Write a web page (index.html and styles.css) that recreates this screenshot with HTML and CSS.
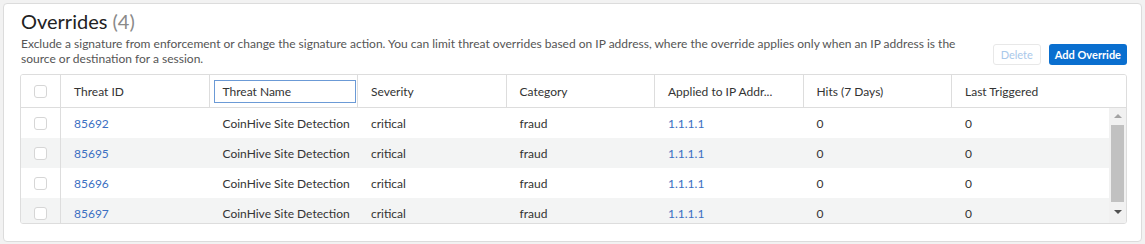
FILE: index.html
```html
<!DOCTYPE html>
<html lang="en">
<head>
    <meta charset="UTF-8">
    <title>Overrides</title>
    <link rel="stylesheet" href="styles.css">
</head>
<body>
    <section class="card">
        <div class="card-head">
            <div class="intro">
                <h2 class="title">Overrides <span class="count">(4)</span></h2>
                <p class="desc">Exclude a signature from enforcement or change the signature action. You can limit threat overrides based on IP address, where the override applies only when an IP address is the source or destination for a session.</p>
            </div>
            <div class="actions">
                <button class="btn btn-disabled">Delete</button>
                <button class="btn btn-primary">Add Override</button>
            </div>
        </div>

        <div class="grid">
            <div class="row row-head">
                <div class="cell cell-check"><span class="check"></span></div>
                <div class="cell">Threat ID</div>
                <div class="cell"><span class="focus-box">Threat Name</span></div>
                <div class="cell">Severity</div>
                <div class="cell">Category</div>
                <div class="cell">Applied to IP Addr...</div>
                <div class="cell">Hits (7 Days)</div>
                <div class="cell">Last Triggered</div>
            </div>
            <div class="grid-body">
                <div class="rows">
                    <div class="row">
                        <div class="cell cell-check"><span class="check"></span></div>
                        <div class="cell link">85692</div>
                        <div class="cell">CoinHive Site Detection</div>
                        <div class="cell">critical</div>
                        <div class="cell">fraud</div>
                        <div class="cell link">1.1.1.1</div>
                        <div class="cell">0</div>
                        <div class="cell">0</div>
                    </div>
                    <div class="row">
                        <div class="cell cell-check"><span class="check"></span></div>
                        <div class="cell link">85695</div>
                        <div class="cell">CoinHive Site Detection</div>
                        <div class="cell">critical</div>
                        <div class="cell">fraud</div>
                        <div class="cell link">1.1.1.1</div>
                        <div class="cell">0</div>
                        <div class="cell">0</div>
                    </div>
                    <div class="row">
                        <div class="cell cell-check"><span class="check"></span></div>
                        <div class="cell link">85696</div>
                        <div class="cell">CoinHive Site Detection</div>
                        <div class="cell">critical</div>
                        <div class="cell">fraud</div>
                        <div class="cell link">1.1.1.1</div>
                        <div class="cell">0</div>
                        <div class="cell">0</div>
                    </div>
                    <div class="row">
                        <div class="cell cell-check"><span class="check"></span></div>
                        <div class="cell link">85697</div>
                        <div class="cell">CoinHive Site Detection</div>
                        <div class="cell">critical</div>
                        <div class="cell">fraud</div>
                        <div class="cell link">1.1.1.1</div>
                        <div class="cell">0</div>
                        <div class="cell">0</div>
                    </div>
                </div>
                <div class="scrollbar">
                    <span class="arrow arrow-up"></span>
                    <span class="thumb"></span>
                    <span class="arrow arrow-down"></span>
                </div>
            </div>
        </div>
    </section>
</body>
</html>
```

FILE: styles.css
```css
:root {
    --page-bg: #f2f2f2;
    --card-border: #dcdcdc;
    --line-color: #dddddd;
    --text-color: #333333;
    --desc-color: #555555;
    --muted-color: #8a8a8a;
    --link-color: #3b6fc2;
    --primary-color: #0a6fcf;
    --stripe-color: #f3f4f4;
    --track-color: #f1f1f1;
}

* {
    margin: 0;
    padding: 0;
    box-sizing: border-box;
}

body {
    font-family: Lato, "Liberation Sans", Arial, sans-serif;
    background-color: var(--page-bg);
    color: var(--text-color);
    padding: 3px 3px 2px 3px;
    font-size: 12px;
}

/* --- card --- */
.card {
    background-color: #ffffff;
    border: 1px solid var(--card-border);
    border-radius: 4px;
    padding: 3px 14px 16px 16px;
    height: 239px;
}

.card-head {
    display: flex;
    align-items: flex-end;
    gap: 34px;
    margin-bottom: 8px;
}

.intro {
    flex: 1;
}

.title {
    font-size: 20px;
    font-weight: 400;
    line-height: 29px;
    color: #222222;
    padding-left: 1px;
}

.count {
    color: var(--muted-color);
}

.desc {
    color: var(--desc-color);
    line-height: 15px;
    padding-left: 1px;
}

.actions {
    display: flex;
    gap: 8px;
    padding-bottom: 1px;
}

/* --- buttons --- */
.btn {
    font-family: inherit;
    font-size: 11px;
    height: 21px;
    padding: 0 5px;
    border-radius: 3px;
    border: 1px solid transparent;
    cursor: pointer;
}

.btn-disabled {
    background-color: #ffffff;
    border-color: #e8e8e8;
    color: #a9c8ea;
    padding: 0 7px;
}

.btn-primary {
    background-color: var(--primary-color);
    color: #ffffff;
    font-weight: 700;
}

/* --- grid --- */
.grid {
    border: 1px solid var(--line-color);
    border-radius: 3px;
    overflow: hidden;
}

.row {
    display: grid;
    grid-template-columns: 40px repeat(6, 148.5px) 1fr;
    height: 30px;
    align-items: center;
}

.row:nth-child(even) {
    background-color: var(--stripe-color);
}

.row-head {
    height: 33px;
    border-bottom: 1px solid var(--line-color);
    background-color: #ffffff;
}

.cell {
    padding-left: 13px;
    height: 100%;
    display: flex;
    align-items: center;
    white-space: nowrap;
    overflow: hidden;
}

.row-head .cell {
    border-right: 1px solid var(--line-color);
    padding-top: 1px;
}

.row-head .cell:last-child {
    border-right: none;
}

.cell-check {
    justify-content: center;
    padding-left: 0;
    border-right: 1px solid var(--line-color);
}

.check {
    width: 13px;
    height: 13px;
    border: 1px solid #d6d6d6;
    border-radius: 3px;
    background-color: #ffffff;
}

.focus-box {
    border: 1px solid #6b9ad6;
    width: 142px;
    height: 23px;
    margin-left: -9px;
    padding-left: 8px;
    display: flex;
    align-items: center;
}

.link {
    color: var(--link-color);
}

/* --- scroll body --- */
.grid-body {
    display: flex;
    height: 115px;
    overflow: hidden;
}

.rows {
    flex: 1;
}

.scrollbar {
    width: 17px;
    background-color: var(--track-color);
    display: flex;
    flex-direction: column;
    align-items: center;
}

.arrow {
    width: 0;
    height: 0;
    border-left: 4px solid transparent;
    border-right: 4px solid transparent;
}

.arrow-up {
    margin-top: 6px;
    border-bottom: 4px solid #a3a3a3;
}

.arrow-down {
    margin-top: 8px;
    border-top: 4px solid #505050;
}

.thumb {
    width: 13px;
    height: 77px;
    margin-top: 7px;
    background-color: #c1c1c1;
}
```
